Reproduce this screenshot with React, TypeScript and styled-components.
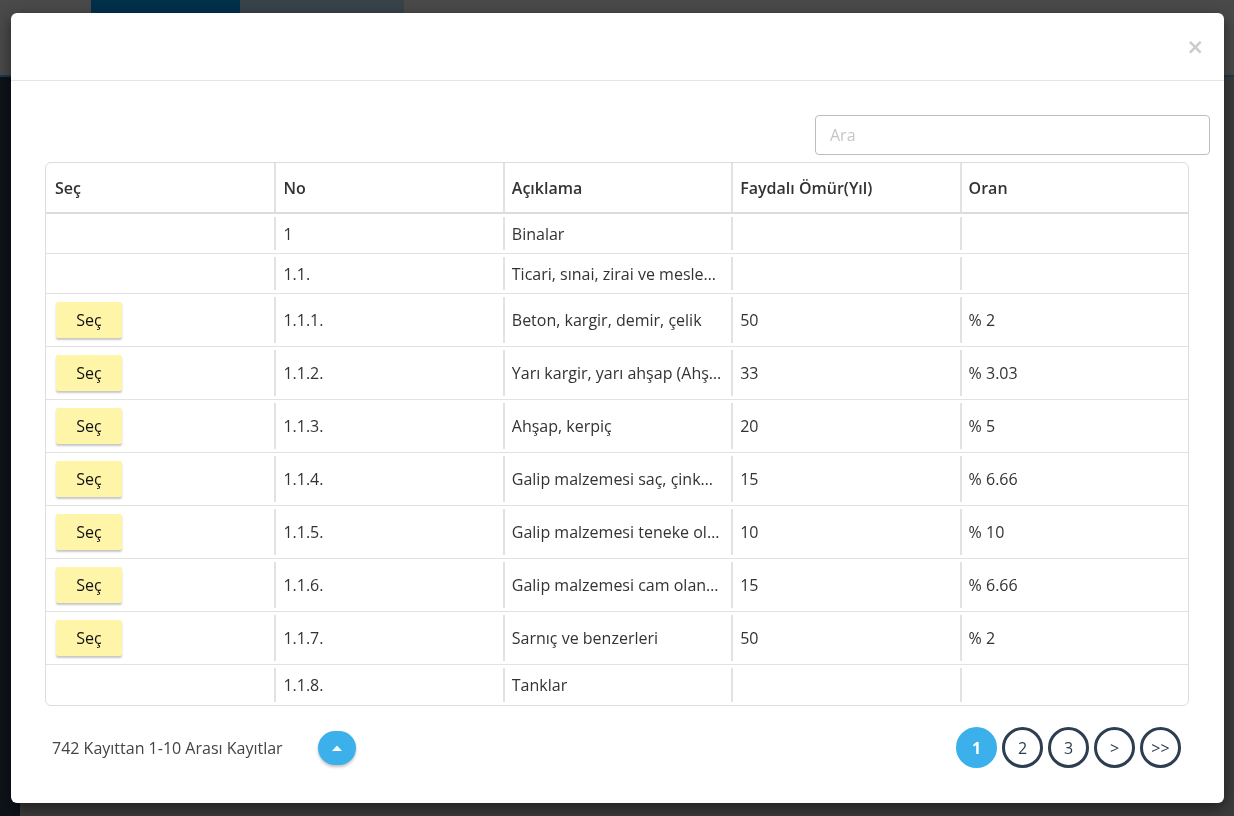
import React from "react";
import styled, { createGlobalStyle } from "styled-components";

const GlobalStyle = createGlobalStyle`
  html, body {
    margin: 0;
    padding: 0;
    height: 100%;
  }
  body {
    font-family: 'Open Sans', 'Liberation Sans', sans-serif;
    background: #3a3a3a;
    overflow: hidden;
  }
  * { box-sizing: border-box; }
`;

type Row = {
  no: string;
  desc: string;
  life?: string;
  rate?: string;
  selectable?: boolean;
};

const rows: Row[] = [
  { no: "1", desc: "Binalar" },
  { no: "1.1.", desc: "Ticari, sınai, zirai ve mesleki binalar" },
  { no: "1.1.1.", desc: "Beton, kargir, demir, çelik", life: "50", rate: "% 2", selectable: true },
  { no: "1.1.2.", desc: "Yarı kargir, yarı ahşap (Ahşap karkas)", life: "33", rate: "% 3.03", selectable: true },
  { no: "1.1.3.", desc: "Ahşap, kerpiç", life: "20", rate: "% 5", selectable: true },
  { no: "1.1.4.", desc: "Galip malzemesi saç, çinko olanlar", life: "15", rate: "% 6.66", selectable: true },
  { no: "1.1.5.", desc: "Galip malzemesi teneke olanlar", life: "10", rate: "% 10", selectable: true },
  { no: "1.1.6.", desc: "Galip malzemesi cam olanlar (seralar)", life: "15", rate: "% 6.66", selectable: true },
  { no: "1.1.7.", desc: "Sarnıç ve benzerleri", life: "50", rate: "% 2", selectable: true },
  { no: "1.1.8.", desc: "Tanklar" },
];

// ---- dimmed page behind the modal ----
const Page = styled.div`
  height: 100vh;
  display: grid;
  grid-template-rows: 77px 1fr;
`;

const TopBar = styled.div`
  background: #4a4a4a;
  display: flex;
  padding-left: 91px;
  border-bottom: 2px solid #1f3a4a;
`;

const PageTab = styled.div<{ $active?: boolean }>`
  width: ${(p) => (p.$active ? "149px" : "164px")};
  background: ${(p) => (p.$active ? "#00304a" : "#38434a")};
`;

const PageBody = styled.div`
  display: grid;
  grid-template-columns: 20px 1fr;
`;

const SideBar = styled.div`
  background: #0e131a;
`;

const Content = styled.div`
  background: #3c3c3c;
`;

// ---- modal ----
const Overlay = styled.div`
  position: fixed;
  inset: 0;
  padding: 13px 10px 13px 11px;
  display: flex;
`;

const Modal = styled.div`
  flex: 1;
  background: #fff;
  border-radius: 6px;
  box-shadow: 0 5px 15px rgba(0, 0, 0, 0.5);
  display: flex;
  flex-direction: column;
`;

const ModalHeader = styled.div`
  height: 68px;
  flex-shrink: 0;
  border-bottom: 1px solid #e5e5e5;
  display: flex;
  align-items: center;
  justify-content: flex-end;
  padding-right: 18px;
`;

const CloseButton = styled.button`
  border: none;
  background: none;
  font-family: 'DejaVu Sans', sans-serif;
  font-size: 21px;
  font-weight: 700;
  color: #cbcbcb;
  line-height: 1;
  padding: 0 2px;
  margin-top: 1px;
  cursor: pointer;
`;

const ModalBody = styled.div`
  padding: 34px 14px 0 34px;
  display: flex;
  flex-direction: column;
`;

const SearchRow = styled.div`
  display: flex;
  justify-content: flex-end;
  margin-bottom: 7px;
`;

const SearchInput = styled.input`
  width: 395px;
  height: 40px;
  border: 1px solid #bdbdbd;
  border-radius: 4px;
  padding: 0 14px;
  font-family: 'Open Sans', sans-serif;
  font-size: 16px;
  color: #333;
  outline: none;
  &::placeholder {
    color: #c6c6c6;
  }
`;

const Table = styled.div`
  margin-right: 21px;
  border: 1px solid #dcdcdc;
  border-radius: 6px;
  overflow: hidden;
`;

const HeadRow = styled.div`
  display: grid;
  grid-template-columns: repeat(5, 1fr);
  height: 51px;
  border-bottom: 2px solid #dcdcdc;
`;

const BodyRow = styled.div<{ $tall?: boolean }>`
  display: grid;
  grid-template-columns: repeat(5, 1fr);
  height: ${(p) => (p.$tall ? "53px" : "40px")};
  border-bottom: 1px solid #e2e2e2;
  &:last-child {
    border-bottom: none;
  }
`;

const Cell = styled.div<{ $head?: boolean }>`
  position: relative;
  display: flex;
  align-items: center;
  padding: 0 9px;
  min-width: 0;
  font-size: 16px;
  font-weight: ${(p) => (p.$head ? 600 : 400)};
  color: #333;
  & + &::before {
    content: "";
    position: absolute;
    left: 0;
    top: ${(p) => (p.$head ? "0" : "3px")};
    bottom: ${(p) => (p.$head ? "0" : "3px")};
    width: 2px;
    background: #e2e2e2;
  }
`;

const CellText = styled.span`
  white-space: nowrap;
  overflow: hidden;
  text-overflow: ellipsis;
`;

const SelectButton = styled.button`
  margin-left: 1px;
  width: 66px;
  height: 36px;
  border: none;
  border-radius: 2px;
  background: #fff5a8;
  box-shadow: 0 2px 2px rgba(0, 0, 0, 0.22);
  font-family: 'Open Sans', sans-serif;
  font-size: 16px;
  font-weight: 400;
  color: #111;
  cursor: pointer;
`;

const Footer = styled.div`
  display: flex;
  align-items: center;
  margin: 21px 43px 37px 41px;
`;

const Summary = styled.div`
  font-size: 16px;
  color: #444;
`;

const ScrollTopButton = styled.button`
  margin-left: 35px;
  width: 38px;
  height: 34px;
  border: none;
  border-radius: 17px;
  background: #3bb0ea;
  box-shadow: 0 2px 3px rgba(0, 0, 0, 0.25);
  display: flex;
  align-items: center;
  justify-content: center;
  cursor: pointer;
`;

const Pager = styled.div`
  margin-left: auto;
  display: flex;
  gap: 5px;
`;

const PageButton = styled.button<{ $active?: boolean }>`
  width: 41px;
  height: 41px;
  border-radius: 50%;
  border: 3px solid ${(p) => (p.$active ? "#3bb0ea" : "#2c3e50")};
  background: ${(p) => (p.$active ? "#3bb0ea" : "#fff")};
  color: ${(p) => (p.$active ? "#fff" : "#2c3e50")};
  font-family: 'Open Sans', sans-serif;
  font-size: 16px;
  font-weight: ${(p) => (p.$active ? 700 : 500)};
  display: flex;
  align-items: center;
  justify-content: center;
  padding: 0;
  cursor: pointer;
`;

export default function App() {
  return (
    <>
      <GlobalStyle />
      <Page>
        <TopBar>
          <PageTab $active />
          <PageTab />
        </TopBar>
        <PageBody>
          <SideBar />
          <Content />
        </PageBody>
      </Page>
      <Overlay>
        <Modal>
          <ModalHeader>
            <CloseButton>×</CloseButton>
          </ModalHeader>
          <ModalBody>
            <SearchRow>
              <SearchInput placeholder="Ara" />
            </SearchRow>
            <Table>
              <HeadRow>
                <Cell $head>Seç</Cell>
                <Cell $head>No</Cell>
                <Cell $head>Açıklama</Cell>
                <Cell $head>Faydalı Ömür(Yıl)</Cell>
                <Cell $head>Oran</Cell>
              </HeadRow>
              {rows.map((r) => (
                <BodyRow key={r.no} $tall={r.selectable}>
                  <Cell>{r.selectable && <SelectButton>Seç</SelectButton>}</Cell>
                  <Cell>
                    <CellText>{r.no}</CellText>
                  </Cell>
                  <Cell>
                    <CellText>{r.desc}</CellText>
                  </Cell>
                  <Cell>
                    <CellText>{r.life}</CellText>
                  </Cell>
                  <Cell>
                    <CellText>{r.rate}</CellText>
                  </Cell>
                </BodyRow>
              ))}
            </Table>
          </ModalBody>
          <Footer>
            <Summary>742 Kayıttan 1-10 Arası Kayıtlar</Summary>
            <ScrollTopButton>
              <svg width="10" height="6" viewBox="0 0 10 6">
                <path d="M0 6 L5 0.5 L10 6 Z" fill="#fff" />
              </svg>
            </ScrollTopButton>
            <Pager>
              <PageButton $active>1</PageButton>
              <PageButton>2</PageButton>
              <PageButton>3</PageButton>
              <PageButton>&gt;</PageButton>
              <PageButton>&gt;&gt;</PageButton>
            </Pager>
          </Footer>
        </Modal>
      </Overlay>
    </>
  );
}
